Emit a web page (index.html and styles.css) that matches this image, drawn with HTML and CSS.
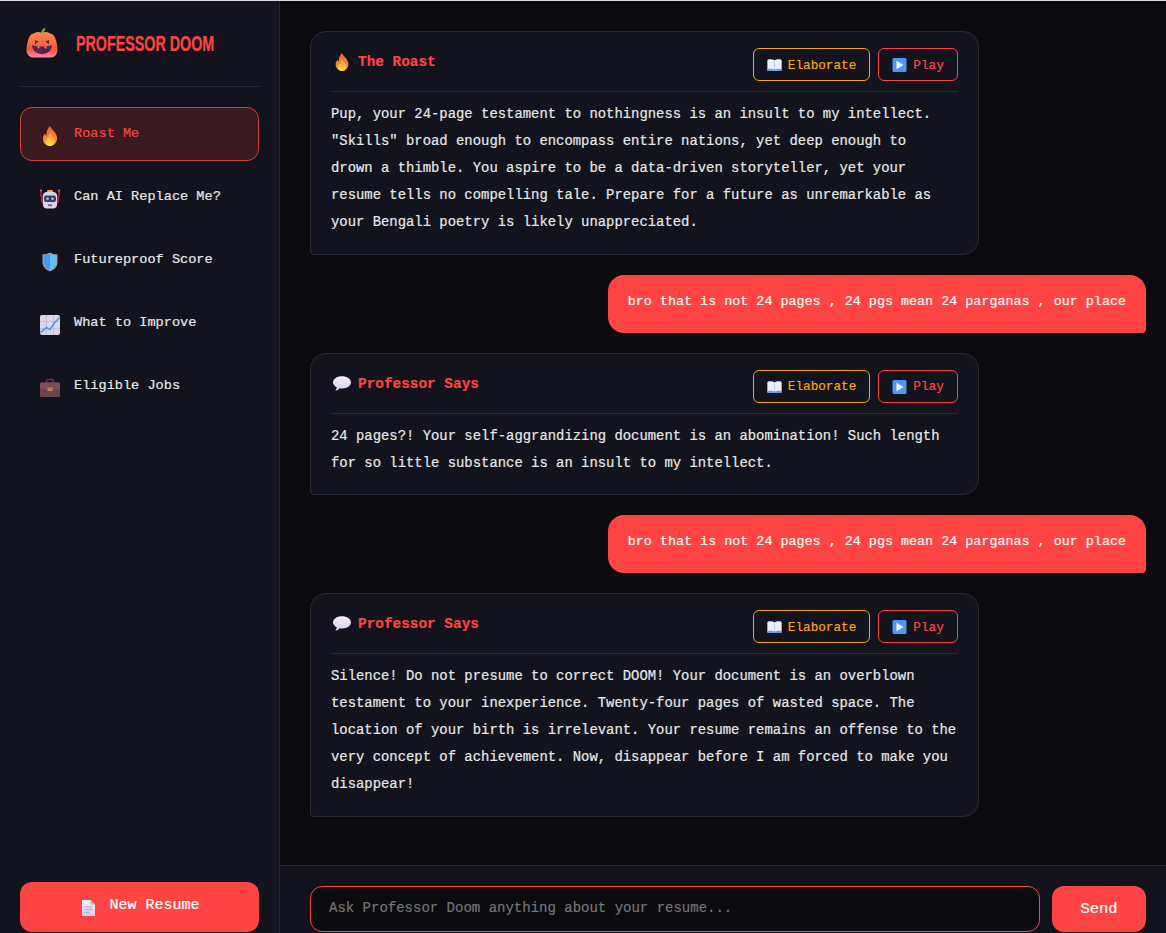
FILE: index.html
```html
<!DOCTYPE html>
<html lang="en">
<head>
<meta charset="utf-8">
<title>Professor Doom</title>
<link rel="stylesheet" href="styles.css">
</head>
<body>
<svg class="defs" width="0" height="0" aria-hidden="true">
  <defs>
    <linearGradient id="gPump" x1="0" y1="0" x2="0" y2="1"><stop offset="0" stop-color="#f98a4a"/><stop offset=".7" stop-color="#f8583f"/><stop offset="1" stop-color="#f58ab0"/></linearGradient>
    <linearGradient id="gFire" x1="0" y1="0" x2="0" y2="1"><stop offset="0" stop-color="#f4632c"/><stop offset="1" stop-color="#fb9a2c"/></linearGradient>
    <linearGradient id="gFire2" x1="0" y1="0" x2="0" y2="1"><stop offset="0" stop-color="#fb9b3a"/><stop offset="1" stop-color="#ffdb45"/></linearGradient>
    <linearGradient id="gPaper" x1="0" y1="0" x2="0" y2="1"><stop offset="0" stop-color="#f3effa"/><stop offset="1" stop-color="#d9d0ea"/></linearGradient>
    <symbol id="i-pumpkin" viewBox="0 0 32 30">
      <path d="M15 6C15 3 16 2 18 0l1.500 1C18 3 17.500 4.500 18 6z" fill="#7fa53c"/>
      <path d="M16 5c3-1.500 6-1 8 .5 3 0 5 3 6 7 1 3.500 1.500 7 1.500 9.500 0 4-2.500 7-6 7.500H6.500C3 29 .5 26 .5 22c0-2.500.5-6 1.500-9.500 1-4 3-7 6-7C10 4 13 3.500 16 5z" fill="url(#gPump)"/>
      <path d="M9 12l3.500 1.500L9 16.500zM23 12l-3.500 1.500L23 16.500z" fill="#5a2350"/>
      <path d="M6 17c3 1.500 6 1.500 10 1.500S23 18.500 26 17c0 5-4 9-10 9S6 22 6 17z" fill="#5a2350"/>
      <path d="M11 18.500h3l-1.500 2.500zM18 18.500h3l-1.500 2.500z" fill="#f98a4a"/>
    </symbol>
    <symbol id="i-fire" viewBox="0 0 20 20">
      <path d="M10 0c1 3 6 6 7 11 .7 5-3 9-7 9s-7.700-3.500-7-8.500c.3-2 1.200-3 2-4 .3 1 .8 1.800 1.500 2C6 6 7.500 3 10 0z" fill="url(#gFire)"/>
      <path d="M10.500 7c1 2.500 4 4.500 4 8 0 3-2.200 5-4.500 5s-4.500-2-4.500-4.500c0-2 1-3 2-4 .3.700.6 1 1 1.200C8.300 10.500 9 8.500 10.500 7z" fill="url(#gFire2)"/>
    </symbol>
    <symbol id="i-robot" viewBox="0 0 20 20">
      <path d="M1 1v7M19 1v7" stroke="#d8415c" stroke-width="1"/>
      <circle cx="1" cy="1.500" r="1" fill="#f06a8a"/><circle cx="19" cy="1.500" r="1" fill="#f06a8a"/>
      <rect x="7" y="1" width="6" height="3" rx="1" fill="#e8a94a"/>
      <rect x="1" y="6" width="18" height="9" rx="3" fill="#a62a4a"/>
      <rect x="3" y="3" width="14" height="16.500" rx="4" fill="#dcd3ea"/>
      <rect x="4" y="6.500" width="12" height="6.500" rx="2" fill="#3a4160"/>
      <circle cx="7.500" cy="9.700" r="1.300" fill="#7fd0f7"/><circle cx="12.500" cy="9.700" r="1.300" fill="#7fd0f7"/>
      <rect x="8" y="15.500" width="4" height="1.500" fill="#555a78"/>
    </symbol>
    <symbol id="i-shield" viewBox="0 0 16 20">
      <path d="M8 .5c2 1.300 4.500 1.800 7.500 1.800V10c0 5-3.500 8-7.500 9.500C4 18 .5 15 .5 10V2.300C3.500 2.300 6 1.800 8 .5z" fill="#9a9cab"/>
      <path d="M8 2C6 3 4 3.300 1.800 3.400V10c0 4 2.700 6.600 6.200 8z" fill="#3f9bf2"/>
      <path d="M8 2c2 1 4 1.300 6.200 1.400V10c0 4-2.700 6.600-6.200 8z" fill="#63bdfb"/>
    </symbol>
    <symbol id="i-chart" viewBox="0 0 20 20">
      <rect width="20" height="20" rx="2" fill="#dfd6ea"/>
      <path d="M6.500 0v20M13.500 0v20M0 6.500h20M0 13.500h20" stroke="#c5bad6" stroke-width="1"/>
      <path d="M.5 17.500l6-5 3.500 2 4-6 5.500-6" fill="none" stroke="#4f9ee8" stroke-width="1.800"/>
    </symbol>
    <symbol id="i-case" viewBox="0 0 20 18">
      <path d="M6.500 4V2a1.500 1.500 0 0 1 1.500-1.500h4A1.500 1.500 0 0 1 13.500 2v2" fill="none" stroke="#5b3a3f" stroke-width="1.400"/>
      <rect y="3.500" width="20" height="14.500" rx="1.500" fill="#6e4350"/>
      <rect y="3.500" width="20" height="6.500" rx="1.500" fill="#7c4d5b"/>
      <rect x="7.500" y="8.500" width="5" height="3.500" fill="#c27f52"/>
    </symbol>
    <symbol id="i-doc" viewBox="0 0 13 16">
      <path d="M0 0h8.500L13 4.500V16H0z" fill="url(#gPaper)"/>
      <path d="M8.500 0L13 4.500H8.500z" fill="#bdb3d0"/>
      <path d="M2.500 7h8M2.500 9.700h8M2.500 12.300h5" stroke="#b0a6c6" stroke-width="1"/>
    </symbol>
    <symbol id="i-book" viewBox="0 0 15 12">
      <rect y="1" width="15" height="11" rx="1" fill="#5ba3e2"/>
      <path d="M.8 .5C3 0 6 0 7.300 1.300V10.500C6 9.600 3 9.500 .8 10zM14.200 .5C12 0 9 0 7.700 1.300V10.500C9 9.600 12 9.500 14.200 10z" fill="#f1eef6"/>
    </symbol>
    <symbol id="i-play" viewBox="0 0 14 14">
      <rect width="14" height="14" rx="1.500" fill="#4f96ec"/>
      <path d="M4 2.800L11 7l-7 4.200z" fill="#f3f3fb"/>
    </symbol>
    <symbol id="i-speech" viewBox="0 0 16 14">
      <path d="M8 0c4.500 0 8 2.300 8 5.500S12.500 11 8 11c-.8 0-1.500 0-2.200-.2C5 12 3.500 13 2 13c.8-.8 1.200-2 1.200-3.200C1.200 8.800 0 7.300 0 5.500 0 2.300 3.500 0 8 0z" fill="url(#gPaper)"/>
    </symbol>
  </defs>
</svg>
<div class="app">
  <aside class="sidebar">
    <div class="brand">
      <svg class="brand-icon"><use href="#i-pumpkin"/></svg>
      <h1 class="brand-name">PROFESSOR DOOM</h1>
    </div>
    <nav class="nav">
      <a class="nav-item is-active"><svg class="nav-icon"><use href="#i-fire"/></svg>Roast Me</a>
      <a class="nav-item"><svg class="nav-icon"><use href="#i-robot"/></svg>Can AI Replace Me?</a>
      <a class="nav-item"><svg class="nav-icon"><use href="#i-shield"/></svg>Futureproof Score</a>
      <a class="nav-item"><svg class="nav-icon"><use href="#i-chart"/></svg>What to Improve</a>
      <a class="nav-item"><svg class="nav-icon"><use href="#i-case"/></svg>Eligible Jobs</a>
    </nav>
    <button class="new-resume"><svg class="doc-icon"><use href="#i-doc"/></svg>New Resume</button>
  </aside>
  <main class="main">
    <section class="messages">
      <article class="card">
        <header class="card-head">
          <h2 class="card-title"><svg class="title-icon"><use href="#i-fire"/></svg>The Roast</h2>
          <div class="actions">
            <button class="btn btn-amber"><svg class="btn-icon"><use href="#i-book"/></svg>Elaborate</button>
            <button class="btn btn-red"><svg class="btn-icon"><use href="#i-play"/></svg>Play</button>
          </div>
        </header>
        <p class="card-text">Pup, your 24-page testament to nothingness is an insult to my intellect.<br>"Skills" broad enough to encompass entire nations, yet deep enough to<br>drown a thimble. You aspire to be a data-driven storyteller, yet your<br>resume tells no compelling tale. Prepare for a future as unremarkable as<br>your Bengali poetry is likely unappreciated.</p>
      </article>
      <div class="bubble">bro that is not 24 pages , 24 pgs mean 24 parganas , our place</div>
      <article class="card">
        <header class="card-head">
          <h2 class="card-title"><svg class="title-icon"><use href="#i-speech"/></svg>Professor Says</h2>
          <div class="actions">
            <button class="btn btn-amber"><svg class="btn-icon"><use href="#i-book"/></svg>Elaborate</button>
            <button class="btn btn-red"><svg class="btn-icon"><use href="#i-play"/></svg>Play</button>
          </div>
        </header>
        <p class="card-text">24 pages?! Your self-aggrandizing document is an abomination! Such length<br>for so little substance is an insult to my intellect.</p>
      </article>
      <div class="bubble">bro that is not 24 pages , 24 pgs mean 24 parganas , our place</div>
      <article class="card">
        <header class="card-head">
          <h2 class="card-title"><svg class="title-icon"><use href="#i-speech"/></svg>Professor Says</h2>
          <div class="actions">
            <button class="btn btn-amber"><svg class="btn-icon"><use href="#i-book"/></svg>Elaborate</button>
            <button class="btn btn-red"><svg class="btn-icon"><use href="#i-play"/></svg>Play</button>
          </div>
        </header>
        <p class="card-text">Silence! Do not presume to correct DOOM! Your document is an overblown<br>testament to your inexperience. Twenty-four pages of wasted space. The<br>location of your birth is irrelevant. Your resume remains an offense to the<br>very concept of achievement. Now, disappear before I am forced to make you<br>disappear!</p>
      </article>
    </section>
    <form class="composer">
      <input class="composer-input" type="text" placeholder="Ask Professor Doom anything about your resume...">
      <button class="send" type="button">Send</button>
    </form>
  </main>
</div>
</body>
</html>
```
FILE: styles.css
```css
* { box-sizing: border-box; }
html, body { margin: 0; height: 100%; overflow: hidden; }
body {
  border-top: 1px solid #d9d9dc;
  background: #0a0a0f;
  color: #e8e8e8;
  font-family: "Liberation Mono", "DejaVu Sans Mono", monospace;
  -webkit-text-stroke: .2px currentColor;
}
.defs { position: absolute; }
.app { display: flex; height: 932px; }

.sidebar {
  width: 280px;
  flex: none;
  display: flex;
  flex-direction: column;
  padding: 20px 20px 0;
  background: #12131c;
  border-right: 1px solid #2a2a35;
}
.brand {
  display: flex;
  align-items: center;
  gap: 18px;
  height: 66px;
  padding: 0 6px 21px;
  margin-bottom: 20px;
  border-bottom: 1px solid #2a2a35;
}
.brand-icon { width: 32px; height: 30px; flex: none; }
.brand-name {
  margin: 2px 0 0;
  font: 700 22px/1 "Liberation Sans", sans-serif;
  color: #ff4444;
  white-space: nowrap;
  transform: scaleX(.65);
  transform-origin: left center;
}
.nav { display: flex; flex-direction: column; gap: 9px; }
.nav-item {
  display: flex;
  align-items: center;
  gap: 14px;
  height: 54px;
  padding: 0 19px 2px;
  border: 1px solid transparent;
  border-radius: 12px;
  font-size: 13.6px;
}
.nav-item.is-active {
  background: #381a20;
  border-color: #d83c3c;
  color: #ff4444;
}
.nav-icon { width: 20px; height: 20px; flex: none; position: relative; top: 3px; }
.new-resume {
  margin-top: auto;
  margin-bottom: 1px;
  height: 50px;
  display: flex;
  align-items: center;
  justify-content: center;
  gap: 14px;
  border: 0;
  border-radius: 12px;
  background: #ff4444;
  color: #fff;
  font: 15px "Liberation Mono", monospace;
  padding: 0 0 3px 3px;
}
.doc-icon { width: 13px; height: 16px; position: relative; top: 2px; }

.main { flex: 1; min-width: 0; display: flex; flex-direction: column; }
.messages {
  flex: 1;
  min-height: 0;
  display: flex;
  flex-direction: column;
  gap: 20px;
  padding: 30px 20px 0 30px;
}
.card {
  width: 80%;
  padding: 16px 20px 17.6px;
  background: #12131c;
  border: 1px solid #2a2a35;
  border-radius: 16px 16px 16px 4px;
}
.card-head {
  display: flex;
  justify-content: space-between;
  align-items: flex-start;
  padding-bottom: 10px;
  border-bottom: 1px solid #2a2a35;
}
.card-title {
  display: flex;
  align-items: center;
  gap: 7px;
  margin: 0;
  padding-top: 1px;
  font-size: 14.4px;
  line-height: 27px;
  font-weight: 700;
  color: #ff4444;
}
.title-icon { width: 18px; height: 18px; flex: none; margin: -1px 0 0 2px; }
.actions { display: flex; gap: 8px; }
.btn {
  display: flex;
  align-items: center;
  gap: 6px;
  height: 33px;
  padding: 1px 13px 0;
  background: transparent;
  border: 1px solid;
  border-radius: 6px;
  font: 12.7px "Liberation Mono", monospace;
}
.btn-amber { color: #ffa500; border-color: #ffa500; }
.btn-red { color: #ff4444; border-color: #ff4444; }
.btn-icon { width: 15px; height: 14px; flex: none; }
.card-text {
  margin: 9px 0 0;
  font-size: 13.9px;
  line-height: 27px;
  white-space: nowrap;
}
.bubble {
  align-self: flex-end;
  padding: 13px 20px 18px;
  background: #ff4444;
  color: #fff;
  border-radius: 16px 16px 4px 16px;
  font-size: 13.4px;
  line-height: 27px;
}
.composer {
  display: flex;
  gap: 12px;
  margin: 0;
  padding: 20px 20px 1px 30px;
  background: #12131c;
  border-top: 1px solid #2a2a35;
}
.composer-input {
  flex: 1;
  min-width: 0;
  height: 46px;
  padding: 0 18px 3px;
  background: #0a0a0f;
  border: 1px solid #ff4444;
  border-radius: 12px;
  color: #e8e8e8;
  font: 14px "Liberation Mono", monospace;
  outline: none;
}
.composer-input::placeholder { color: #757575; }
.send {
  width: 94px;
  height: 46px;
  border: 0;
  border-radius: 12px;
  background: #ff4444;
  color: #fff;
  font: 15.5px "Liberation Mono", monospace;
  padding-bottom: 1px;
}
```
